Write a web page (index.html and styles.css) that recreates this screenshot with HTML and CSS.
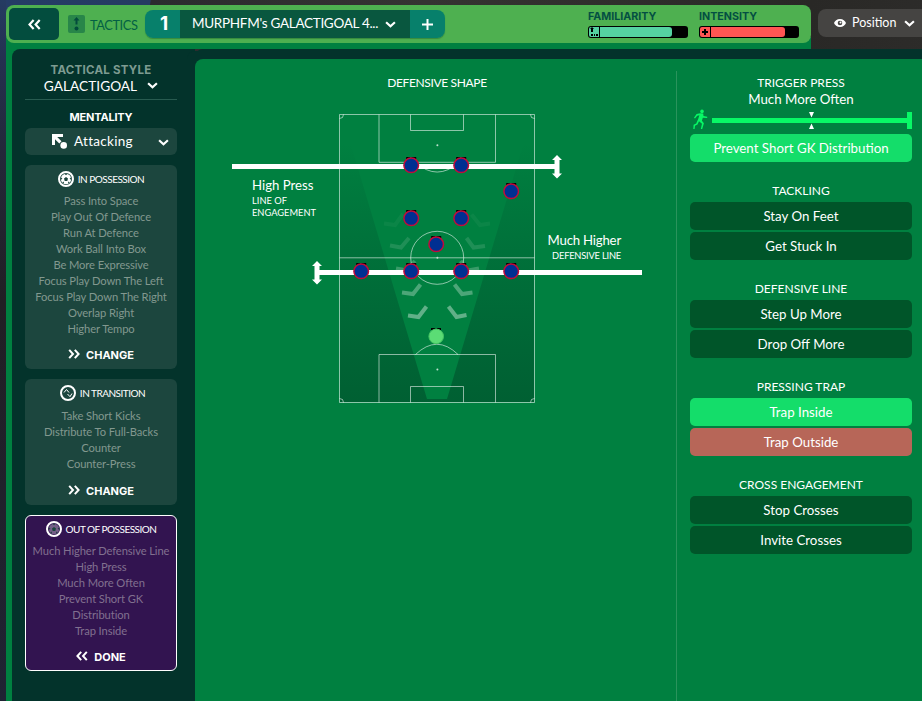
FILE: index.html
```html
<!doctype html>
<html lang="en">
    <head>
        <meta charset="utf-8">
        <meta name="viewport" content="width=device-width, initial-scale=1.0">
        <title>Tactics</title>
        <link rel="stylesheet" href="styles.css">
    </head>
    <body>
        <svg class="defs" width="0" height="0">
            <defs>
                <symbol id="chevron" viewBox="0 0 10 6"><path d="M1 1l4 3.6L9 1" fill="none" stroke="#fff" stroke-width="2"/></symbol>
                <symbol id="double" viewBox="0 0 12 10"><path d="M1.2.8L5 5 1.2 9.2M6.8.8L10.6 5 6.8 9.2" fill="none" stroke="#fff" stroke-width="2"/></symbol>
                <symbol id="ball" viewBox="0 0 16 16">
                    <circle cx="8" cy="8" r="5.200" fill="currentColor"/>
                    <path class="patch" d="M8 6l2 1.500-.7 2.400H6.700L6 7.500zM6.500 2.800h3L8 4.200zM13.100 6.200v2.600l-1.500-1zM2.900 6.200v2.600l1.500-1zM4.200 11.500l1.500-.9.400 2.100zM11.800 11.500l-1.500-.9-.4 2.100z"/>
                    <circle cx="8" cy="8" r="7" fill="none" stroke="#fff" stroke-width="2"/>
                </symbol>
                <symbol id="player" viewBox="-9 -10 18 20" overflow="visible">
                    <path d="M-5-6v-2.300h3.500l1 1 1-1H5V-6z"/>
                    <circle r="7.300" fill="#002f92" stroke="#c20b3a" stroke-width="1.500"/>
                </symbol>
            </defs>
        </svg>
        <header class="topbar">
            <div class="toolbar">
                <button class="back"><svg class="flip" width="13" height="11"><use href="#double"/></svg></button>
                <svg class="tactics-icon" width="17" height="18" viewBox="0 0 17 18">
                    <rect width="17" height="18" rx="2" fill="#288649"/>
                    <path d="M8.500 2l3 3.500h-2V9.500h-2v-4h-2z" fill="#034b3c"/><circle cx="8.500" cy="13.500" r="2" fill="#034b3c"/>
                </svg>
                <span class="tactics">TACTICS</span>
                <div class="selector">
                    <div class="slot">1</div>
                    <div class="tactic-name"><span>MURPHFM's GALACTIGOAL 4...</span><svg width="11" height="7"><use href="#chevron"/></svg></div>
                    <button class="add"><svg width="11" height="11"><path d="M5.500 0v11M0 5.500h11" stroke="#fff" stroke-width="2"/></svg></button>
                </div>
                <div class="meters">
                    <div class="meter">
                        <b>FAMILIARITY</b>
                        <div class="track familiarity">
                            <span class="meter-icon"><svg width="10" height="10"><path d="M3 0l2 2H4v3H2V2H1zM2 7h2v2H2zM5 7h1v2H5zM7 7h2v2H7z"/></svg></span>
                            <span class="fill"></span>
                        </div>
                    </div>
                    <div class="meter">
                        <b>INTENSITY</b>
                        <div class="track intensity">
                            <span class="meter-icon"><svg width="10" height="10"><path d="M4 2h2v2h2v2H6v2H4V6H2V4h2z"/></svg></span>
                            <span class="fill"></span>
                        </div>
                    </div>
                </div>
            </div>
            <button class="position">
                <svg width="12" height="8" viewBox="0 0 12 8"><path fill="#fff" fill-rule="evenodd" d="M6 0C3 0 .8 2 0 4c.8 2 3 4 6 4s5.200-2 6-4c-.8-2-3-4-6-4zm0 1.700a2.300 2.300 0 110 4.600 2.300 2.300 0 010-4.600z"/><circle cx="6.500" cy="3.500" r="1" fill="#fff"/></svg>
                <span>Position</span>
                <svg width="11" height="7"><use href="#chevron"/></svg>
            </button>
        </header>
        <div class="shell">
            <aside class="sidebar">
                <div class="style-picker">
                    <b>TACTICAL STYLE</b>
                    <div><span>GALACTIGOAL</span><svg width="11" height="7"><use href="#chevron"/></svg></div>
                </div>
                <h2>MENTALITY</h2>
                <div class="mentality">
                    <svg width="16" height="15" viewBox="0 0 16 15"><path d="M0 0h11v3H5.200l4.300 4.300-2.200 2.200L3 5.200V11H0z" fill="#fff"/><circle cx="11.700" cy="11.400" r="3.300" fill="#fff"/></svg>
                    <span>Attacking</span>
                    <svg class="arrow" width="11" height="7"><use href="#chevron"/></svg>
                </div>
                <section class="card">
                    <h3><svg width="16" height="16"><use href="#ball"/></svg>IN POSSESSION</h3>
                    <ul>
                        <li>Pass Into Space</li>
                        <li>Play Out Of Defence</li>
                        <li>Run At Defence</li>
                        <li>Work Ball Into Box</li>
                        <li>Be More Expressive</li>
                        <li>Focus Play Down The Left</li>
                        <li>Focus Play Down The Right</li>
                        <li>Overlap Right</li>
                        <li>Higher Tempo</li>
                    </ul>
                    <button><svg width="12" height="10"><use href="#double"/></svg>CHANGE</button>
                </section>
                <section class="card transition">
                    <h3><svg width="16" height="16" viewBox="0 0 16 16" fill="none" stroke="#fff"><circle cx="8" cy="8" r="7" stroke-width="2"/><path d="M4 7.500l2.500-3 2.500 3M7.500 9l2.500 2.700L12 8.500"/></svg>IN TRANSITION</h3>
                    <ul>
                        <li>Take Short Kicks</li>
                        <li>Distribute To Full-Backs</li>
                        <li>Counter</li>
                        <li>Counter-Press</li>
                    </ul>
                    <button><svg width="12" height="10"><use href="#double"/></svg>CHANGE</button>
                </section>
                <section class="card active">
                    <h3><svg width="16" height="16"><use href="#ball"/></svg>OUT OF POSSESSION</h3>
                    <ul>
                        <li>Much Higher Defensive Line</li>
                        <li>High Press</li>
                        <li>Much More Often</li>
                        <li>Prevent Short GK</li>
                        <li>Distribution</li>
                        <li>Trap Inside</li>
                    </ul>
                    <button><svg class="flip" width="12" height="10"><use href="#double"/></svg>DONE</button>
                </section>
            </aside>
            <main>
                <section class="shape">
                    <h2>DEFENSIVE SHAPE</h2>
                    <svg class="pitch" width="430" height="305" viewBox="225 105 430 305">
                        <defs>
                            <linearGradient id="shade" x1="0" y1="0" x2="0" y2="1">
                                <stop offset=".1" stop-color="#00522f" stop-opacity="0"/>
                                <stop offset="1" stop-color="#005a30" stop-opacity=".85"/>
                            </linearGradient>
                        </defs>
                        <path d="M340 115h2L427 399h20L532 115h2v287H340z" fill="url(#shade)"/>
                        <g fill="none" stroke="#fff" stroke-opacity=".55">
                            <path d="M339.500 114.500h195v288h-195zM339.500 257.800h195M379 114.500v47.800h116.500v-47.800M410.500 114.500v16h53v-16M379 402.500v-48h116.500v48M410.500 402.500v-16h53v16"/>
                            <circle cx="437.200" cy="257.800" r="26.500"/>
                            <path d="M415.500 162.300q21.700 19.500 43.400 0M415.500 354.500q21.500-20.500 42.500 0M339.500 118.500a4 4 0 004-4M530.500 114.500a4 4 0 004 4M339.500 398.500a4 4 0 014 4M530.500 402.500a4 4 0 014-4"/>
                        </g>
                        <g fill="#bfe0cf"><circle cx="437.400" cy="145.200" r="1"/><circle cx="437.400" cy="257.800" r="1"/><circle cx="437.400" cy="369.500" r="1"/></g>
                        <g fill="none" stroke="#cfe6d8" stroke-width="4">
                            <path opacity=".05" d="M384 223.500l11 1.500 8-11M490 223.500l-10 1.500-8.500-10.500"/>
                            <path opacity=".15" d="M390 245.500l11 2 8-9.500M485 246l-11.500 1.500-7-9.500"/>
                            <path opacity=".27" d="M396 268.500l11 2 8-9.500M479 268.500l-11 2-7.500-9.500"/>
                            <path opacity=".37" d="M402 292.500l11 1.500 7.500-9.500M472.500 292.500l-10.500 1.500-7.500-9.500"/>
                            <path opacity=".47" d="M408 315.500l10.500 1.500 8-10.500M466.500 315l-10 2-8-10.500"/>
                        </g>
                        <g fill="#fff">
                            <path d="M232 164h322.500v-4H552l5-5 5 5h-2.500v13.500h2.500l-5 5-5-5h2.500V169H232z"/>
                            <path d="M642 270H319.500v-4h2.500l-5-5-5 5h2.500v13.500H312l5 5 5-5h-2.500V275H642z"/>
                        </g>
                        <g class="players">
                            <use href="#player" x="402.200" y="155.300" width="18" height="20"/>
                            <use href="#player" x="452.200" y="155.300" width="18" height="20"/>
                            <use href="#player" x="502.200" y="181.300" width="18" height="20"/>
                            <use href="#player" x="402.200" y="208.300" width="18" height="20"/>
                            <use href="#player" x="452.200" y="208.300" width="18" height="20"/>
                            <use href="#player" x="427.200" y="234.300" width="18" height="20"/>
                            <use href="#player" x="352.200" y="261.300" width="18" height="20"/>
                            <use href="#player" x="402.200" y="261.300" width="18" height="20"/>
                            <use href="#player" x="452.200" y="261.300" width="18" height="20"/>
                            <use href="#player" x="502.200" y="261.300" width="18" height="20"/>
                        </g>
                        <path d="M431 330v-2h3.500l1.500 1 1.500-1h3.500v2z"/>
                        <circle cx="436.200" cy="336.400" r="7.300" fill="#5bdc75" stroke="#45c463"/>
                        <g class="labels">
                            <text x="252" y="190" class="big press">High Press</text>
                            <text x="252" y="204">LINE OF</text>
                            <text x="252" y="216">ENGAGEMENT</text>
                            <text x="621" y="245" class="big end">Much Higher</text>
                            <text x="621" y="259" class="end">DEFENSIVE LINE</text>
                        </g>
                    </svg>
                </section>
                <section class="options">
                    <div class="group">
                        <h2>TRIGGER PRESS</h2>
                        <p>Much More Often</p>
                        <svg class="slider" width="222" height="22" viewBox="690 109 222 22">
                            <path d="M700.200 113.300l3 .2.300 2.500 3.700.7v1.300l-4.400-.3-.9 3 2 2.500-1.700 5.800h-1.400l1.200-5.200-3-2.500-1.500 3.200-2.500 1.300-.4 3.200h-1.300l.3-4.300 2.600-1.300 2-4.400 1.200-3.700-2.200.4-2.200 2.800-1-.8 2.600-3.600z" fill="#08f866"/>
                            <circle cx="702" cy="111.400" r="1.800" fill="#08f866"/>
                            <path d="M712 118h195v-6h5v17h-5v-6H712z" fill="#08f866"/>
                            <path d="M809 112h5l-2.500 5.500zM809 129h5l-2.500-5.500z" fill="#fff"/>
                        </svg>
                        <button class="on">Prevent Short GK Distribution</button>
                    </div>
                    <div class="group">
                        <h2>TACKLING</h2>
                        <button>Stay On Feet</button>
                        <button>Get Stuck In</button>
                    </div>
                    <div class="group">
                        <h2>DEFENSIVE LINE</h2>
                        <button>Step Up More</button>
                        <button>Drop Off More</button>
                    </div>
                    <div class="group">
                        <h2>PRESSING TRAP</h2>
                        <button class="on">Trap Inside</button>
                        <button class="off">Trap Outside</button>
                    </div>
                    <div class="group">
                        <h2>CROSS ENGAGEMENT</h2>
                        <button>Stop Crosses</button>
                        <button>Invite Crosses</button>
                    </div>
                </section>
            </main>
        </div>
    </body>
</html>
```
FILE: styles.css
```css
* {
    box-sizing: border-box;
    margin: 0;
    padding: 0;
}

body {
    width: 922px;
    height: 701px;
    overflow: hidden;
    padding-left: 6px;
    display: flex;
    flex-direction: column;
    background: linear-gradient(#253b62 0, #243050 60px, #23283a 150px, #211f24 300px, #1f2333) 0 0 / 6px 100% no-repeat, linear-gradient(100deg, #253c66 0, #253b62 148px, #2b2b2e 149px, #353332 420px, #292826 800px, #302f2d);
    color: #fff;
    font: 13px/16px Lato, sans-serif;
}

.defs {
    display: none;
}

svg {
    display: block;
    flex: none;
}

button {
    border: 0;
    color: #fff;
    font: inherit;
    display: flex;
    align-items: center;
    justify-content: center;
}

h2 {
    font-size: 12px;
    font-weight: 400;
    line-height: 16px;
    text-align: center;
}

.flip {
    transform: scaleX(-1);
}

.topbar {
    height: 49px;
    padding-top: 5px;
    display: flex;
    gap: 7px;
    flex: none;
}

.toolbar {
    width: 805px;
    height: 38px;
    padding: 0 12px 0 3px;
    display: flex;
    flex: none;
    align-items: center;
    background: #4eb050;
    border-radius: 8px;
}

.back {
    width: 50px;
    height: 32px;
    border-radius: 5px;
    background: #034d3e;
}

.tactics-icon {
    margin-left: 9px;
}

.tactics {
    width: 55px;
    margin-left: 5px;
    padding-top: 1px;
    color: #036044;
    font-size: 12.8px;
    letter-spacing: -.4px;
}

.selector {
    width: 300px;
    height: 28px;
    display: flex;
    border-radius: 8px;
    overflow: hidden;
    box-shadow: 0 1px 1px #378a3d;
}

.slot {
    width: 35px;
    background: #07806b;
    font: bold 19px/28px Inter, sans-serif;
    text-align: center;
    padding-left: 3px;
}

.tactic-name {
    width: 230px;
    padding-left: 12px;
    display: flex;
    align-items: center;
    gap: 7px;
    background: #09573f;
    font-size: 13.5px;
    letter-spacing: -.3px;
    white-space: nowrap;
}

.tactic-name span {
    width: 186px;
    padding-bottom: 2px;
}

.add {
    width: 35px;
    background: #07806b;
}

.meters {
    display: flex;
    gap: 11px;
    margin: 0 0 0 auto;
}

.meter {
    width: 100px;
    color: #034f42;
    font: 10.7px/12px Inter, sans-serif;
}

.meter b {
    display: block;
}

.track {
    height: 12px;
    margin-top: 3px;
    padding: 1px;
    display: flex;
    gap: 1px;
    background: #000;
    border-radius: 3px;
}

.meter-icon {
    width: 10px;
    border-radius: 2px 0 0 2px;
}

.fill {
    width: 72px;
    border-radius: 0 3px 3px 0;
}

.familiarity span {
    background: #55d2a2;
}

.intensity span {
    background: #ff5553;
}

.intensity .fill {
    width: 74px;
}

.position {
    width: 120px;
    height: 28px;
    margin-top: 4px;
    padding-left: 16px;
    flex: none;
    justify-content: flex-start;
    gap: 6px;
    border-radius: 8px;
    background: #454442;
    font-size: 12.5px;
}

.position span {
    width: 46px;
    text-align: left;
}

/* green frame to the left of and above the dark panel */
.shell {
    flex: 1;
    margin-top: -12px;
    padding: 12px 0 0 6px;
    display: flex;
    background: linear-gradient(#008040, #008040) 0 0 / 805px 12px no-repeat, linear-gradient(#008040, #008040) 0 0 / 20px 100% no-repeat;
    position: relative;
    z-index: -1;
}

.sidebar {
    width: 183px;
    padding: 14px 18px 0 13px;
    flex: none;
    background: #03332b;
    border-radius: 8px 0 0 0;
}

.style-picker {
    height: 37px;
    border-bottom: 1px solid #285b50;
    text-align: center;
}

.style-picker b {
    display: block;
    color: #7d9b91;
    font: bold 11.5px/15px Inter, sans-serif;
    letter-spacing: .25px;
}

.style-picker div {
    display: flex;
    align-items: center;
    justify-content: center;
    gap: 10px;
    font-size: 13.7px;
    line-height: 15px;
}

.sidebar h2 {
    margin: 9px 0 3px;
    font: bold 11px/16px Inter, sans-serif;
    letter-spacing: -.2px;
}

.mentality {
    height: 27px;
    padding: 0 8px 1px 27px;
    display: flex;
    align-items: center;
    gap: 6px;
    background: #1c463e;
    border-radius: 6px;
    font-size: 13.5px;
    letter-spacing: .3px;
}

.mentality .arrow {
    margin: 3px 0 0 auto;
}

.card {
    margin-top: 10px;
    padding: 6px 0;
    background: #1c463e;
    border-radius: 6px;
    text-align: center;
}

.card h3 {
    display: flex;
    align-items: center;
    justify-content: center;
    gap: 4px;
    height: 16px;
    font-size: 10px;
    font-weight: 400;
    letter-spacing: -.5px;
    white-space: nowrap;
}

.card ul {
    margin: 6px 0 10px;
    list-style: none;
    color: #82988f;
    font-size: 11.2px;
    letter-spacing: -.1px;
    line-height: 16px;
    white-space: nowrap;
}

.card button {
    width: 100%;
    height: 16px;
    gap: 6px;
    background: none;
    font: bold 11px/16px Inter, sans-serif;
}

.card button svg {
    margin-top: -2px;
}

.patch {
    fill: #1c463e;
}

.transition h3 {
    padding-left: 3px;
}

.transition ul {
    margin: 7px 0 11px;
}

.active {
    padding: 5px 0;
    border: 1px solid #fff;
    background: #321450;
}

.active h3 svg {
    color: #745f87;
}

.active ul {
    color: #81708f;
}

main {
    flex: 1;
    margin-top: 10px;
    display: flex;
    background: #008040;
    border-radius: 8px 0 0 0;
    box-shadow: -8px -8px 0 0 #03332b, 0 -10px 0 0 #03332b;
}

.shape {
    width: 481px;
    padding: 16px 0 0 30px;
}

.shape h2 {
    width: 424px;
    margin-bottom: 14px;
    letter-spacing: -.35px;
}

.options {
    flex: 1;
    margin-top: 12px;
    padding: 4px 10px 0 13px;
    border-left: 1px solid #2a935c;
}

.group {
    display: flex;
    flex-direction: column;
    gap: 2px;
    margin-bottom: 21px;
}

.group h2 {
    margin-bottom: 2px;
}

.group p {
    margin-top: -4px;
    text-align: center;
    font-size: 13.3px;
}

.slider {
    margin-bottom: 1px;
}

.group button {
    height: 28px;
    border-radius: 5px;
    background: #005529;
    font-size: 13.3px;
    padding-bottom: 1px;
}

.group h2 + button {
    margin-top: -1px;
}

.group .on {
    background: #14dd6a;
}

.group .off {
    background: #b76658;
}

.labels {
    fill: #fff;
    font-size: 9.3px;
}

.labels .big {
    font-size: 13.2px;
}

.labels .end {
    text-anchor: end;
    letter-spacing: -.2px;
}
```
